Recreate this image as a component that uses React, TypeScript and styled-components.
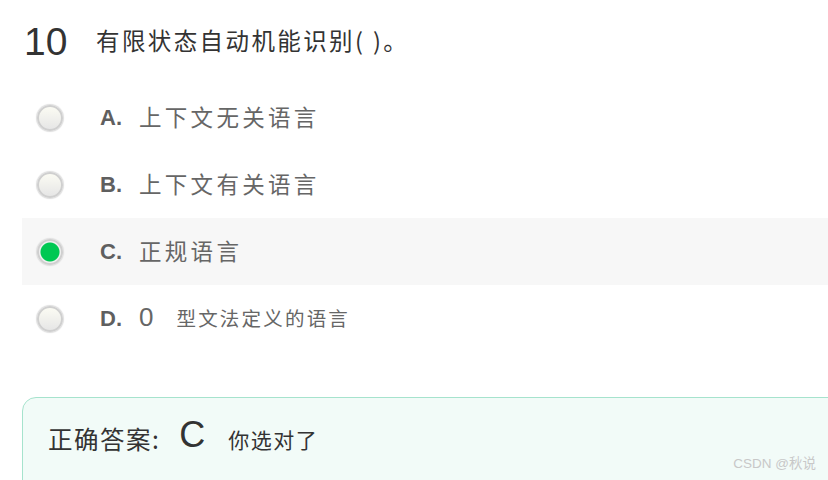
import React from "react";
import styled, { createGlobalStyle } from "styled-components";

const GlobalStyle = createGlobalStyle`
  html, body {
    margin: 0;
    padding: 0;
    background: #ffffff;
    overflow: hidden;
  }
  body {
    font-family: "Liberation Sans", "Noto Sans CJK SC", sans-serif;
  }
`;

const Page = styled.div`
  width: 828px;
  height: 480px;
  position: relative;
  overflow: hidden;
  padding: 18px 0 0 22px;
  box-sizing: border-box;
`;

const Title = styled.div`
  display: flex;
  align-items: center;
  height: 48px;
  color: #333;
`;

const Number = styled.span`
  font-family: "Liberation Sans", sans-serif;
  font-size: 39px;
  width: 72px;
  padding-left: 2px;
  line-height: 48px;
`;

const Question = styled.span`
  font-family: "Noto Sans CJK SC", sans-serif;
  font-size: 23.5px;
  letter-spacing: 2.4px;
  margin-top: -5px;
`;

const Options = styled.div`
  margin-top: 18px;
  display: flex;
  flex-direction: column;
`;

const Row = styled.div<{ $active?: boolean }>`
  display: flex;
  align-items: center;
  height: 67px;
  background: ${(p) => (p.$active ? "#f7f7f7" : "transparent")};
`;

const Radio = styled.span<{ $checked?: boolean }>`
  width: 26px;
  height: 26px;
  margin-left: 15px;
  border-radius: 50%;
  box-sizing: border-box;
  border: 2px solid #cfcfcf;
  box-shadow: 0 0 1px 1px #dedede;
  background: ${(p) =>
    p.$checked
      ? "radial-gradient(circle, #00c853 0 9px, #f0f0f0 10px)"
      : "linear-gradient(#fbfbf3, #e6e6e6)"};
`;

const Letter = styled.span`
  font-family: "Liberation Sans", sans-serif;
  font-weight: bold;
  font-size: 22px;
  color: #5f5f5f;
  margin-left: 37px;
  width: 39px;
`;

const Text = styled.span`
  font-family: "Noto Sans CJK SC", sans-serif;
  font-size: 22.5px;
  letter-spacing: 3.3px;
  color: #666;
  margin-top: -4px;
`;

const Zero = styled.span`
  font-family: "Liberation Sans", sans-serif;
  font-size: 26px;
  color: #666;
  margin-right: 23px;
  margin-top: -2px;
`;

const Small = styled.span`
  font-family: "Noto Sans CJK SC", sans-serif;
  font-size: 19.5px;
  letter-spacing: 2.2px;
  color: #666;
  margin-top: -2px;
`;

const Answer = styled.div`
  margin-top: 45px;
  margin-right: -30px;
  height: 110px;
  border: 1px solid #a6e3cd;
  border-radius: 14px;
  background: #f2fbf8;
  display: flex;
  align-items: center;
  padding: 0 0 66px 25px;
  box-sizing: border-box;
  color: #333;
`;

const AnswerLabel = styled.span`
  font-family: "Noto Sans CJK SC", sans-serif;
  font-size: 24.5px;
  letter-spacing: 1.5px;
  margin-top: 38px;
`;

const AnswerLetter = styled.span`
  font-family: "Liberation Sans", sans-serif;
  font-size: 36px;
  margin-left: 19px;
  margin-right: 23px;
  margin-top: 32px;
`;

const Verdict = styled.span`
  font-family: "Noto Sans CJK SC", sans-serif;
  font-size: 21px;
  letter-spacing: 1.5px;
  margin-top: 40px;
`;

const Watermark = styled.div`
  position: absolute;
  right: 12px;
  bottom: 8px;
  font-family: "Liberation Sans", "Noto Sans CJK SC", sans-serif;
  font-size: 13.5px;
  color: #c8c8c8;
`;

export default function App() {
  return (
    <>
      <GlobalStyle />
      <Page>
        <Title>
          <Number>10</Number>
          <Question>有限状态自动机能识别( )。</Question>
        </Title>
        <Options>
          <Row>
            <Radio />
            <Letter>A.</Letter>
            <Text>上下文无关语言</Text>
          </Row>
          <Row>
            <Radio />
            <Letter>B.</Letter>
            <Text>上下文有关语言</Text>
          </Row>
          <Row $active>
            <Radio $checked />
            <Letter>C.</Letter>
            <Text>正规语言</Text>
          </Row>
          <Row>
            <Radio />
            <Letter>D.</Letter>
            <Zero>0</Zero>
            <Small>型文法定义的语言</Small>
          </Row>
        </Options>
        <Answer>
          <AnswerLabel>正确答案:</AnswerLabel>
          <AnswerLetter>C</AnswerLetter>
          <Verdict>你选对了</Verdict>
        </Answer>
        <Watermark>CSDN @秋说</Watermark>
      </Page>
    </>
  );
}
